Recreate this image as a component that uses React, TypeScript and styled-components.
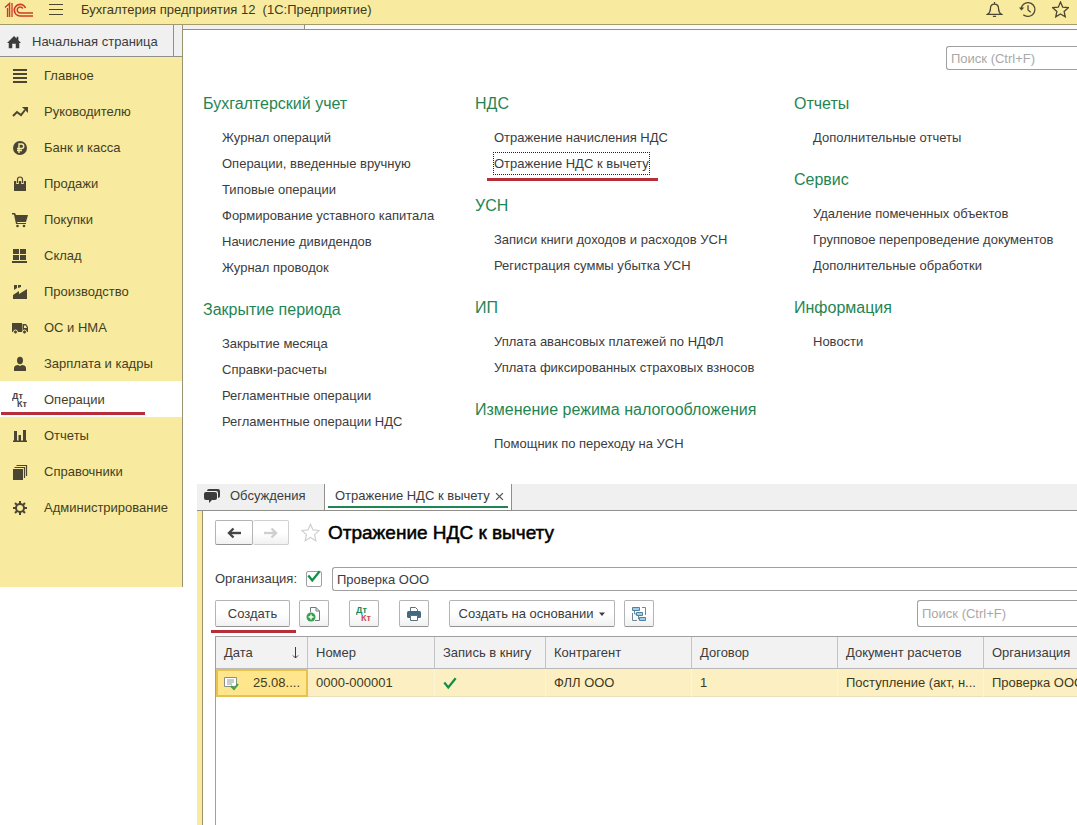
import React from "react";
import styled, { createGlobalStyle, css } from "styled-components";

const c = {
  yellow: "#f8eb9f",
  line: "#8f8f8c",
  soft: "#f0f0f0",
  green: "#1f8553",
  red: "#b82d3a",
  text: "#3c3c3c",
  icon: "#4b4633",
};

const Global = createGlobalStyle`
  *, *::before, *::after { box-sizing: border-box; }
  html, body, #root { height: 100%; }
  body { margin: 0; background: #fff; color: ${c.text}; font: 13px/16px "Liberation Sans", Arial, sans-serif; overflow-x: hidden; }
  button, input { font: inherit; color: inherit; }
  h1, h2, ul { margin: 0; padding: 0; font-weight: 400; }
  ul { list-style: none; }
  a { color: inherit; text-decoration: none; }
  svg { display: block; flex: none; }
`;

const Page = styled.div`
  display: flex;
  flex-direction: column;
  min-height: 100vh;
  overflow: hidden;
`;

const Header = styled.header`
  display: flex;
  align-items: center;
  height: 25px;
  padding: 0 8px 5px 4px;
  background: ${c.yellow};
  border-bottom: 1px solid #a39a6e;
`;

const AppTitle = styled.span`
  flex: 1;
  margin-left: 17px;
  white-space: pre;
  color: #40391d;
`;

const IconButton = styled.button`
  display: grid;
  place-items: center;
  padding: 0;
  border: 0;
  background: none;
  color: ${c.icon};
`;

const MenuButton = styled(IconButton)`
  margin-left: 14px;
`;

const HeaderActions = styled.div`
  display: flex;
  gap: 16px;
`;

const Body = styled.div`
  display: flex;
  flex: 1;
`;

const Sidebar = styled.aside`
  flex: none;
  align-self: flex-start;
  width: 183px;
  background: ${c.yellow};
  border-right: 1px solid #99936f;
`;

const HomeRow = styled.div`
  height: 32px;
  background: ${c.soft};
  border-bottom: 1px solid ${c.line};
`;

const HomeTab = styled.a`
  display: flex;
  align-items: center;
  gap: 11px;
  width: 174px;
  height: 31px;
  padding: 2px 0 0 7px;
  border-right: 1px solid ${c.line};
`;

const NavList = styled.ul`
  padding-bottom: 62px;
`;

const NavItem = styled.li<{ $active?: boolean }>`
  position: relative;
  height: 36px;
  background: ${(p) => (p.$active ? "#fff" : "transparent")};
`;

const NavLink = styled.a`
  display: flex;
  align-items: center;
  gap: 16px;
  height: 36px;
  padding: 2px 0 0 12px;
  color: #453e1f;
`;

const Mark = styled.span<{ $left: number; $width: number; $bottom: number }>`
  position: absolute;
  left: ${(p) => p.$left}px;
  bottom: ${(p) => p.$bottom}px;
  width: ${(p) => p.$width}px;
  height: 3px;
  background: ${c.red};
`;

const Main = styled.main`
  display: flex;
  flex-direction: column;
  flex: 1;
  min-width: 0;
`;

const HiddenTabs = styled.div`
  height: 4px;
  background: #fafafa;
`;

const HiddenTab = styled.div`
  width: 122px;
  height: 4px;
  background: ${c.soft};
  border-right: 1px solid ${c.line};
`;

const MenuPanel = styled.section`
  border-top: 1px solid ${c.line};
  padding: 16px 0 27px 20px;
`;

const searchBox = css`
  padding: 0 4px;
  border: 1px solid #a0a0a0;
  border-right: 0;
  border-radius: 3px 0 0 3px;
  background: #fff;
  outline: none;
  &::placeholder { color: #a8a8a8; opacity: 1; }
`;

const MenuSearch = styled.input`
  ${searchBox}
  display: block;
  width: 131px;
  height: 24px;
  margin-left: auto;
`;

const MenuGrid = styled.div`
  display: grid;
  grid-template-columns: 272px 319px 1fr;
  margin-top: 22px;
`;

const MenuColumn = styled.div`
  display: flex;
  flex-direction: column;
  gap: 17px;
`;

const GroupTitle = styled.h2`
  margin-bottom: 9px;
  font-size: 16px;
  line-height: 24px;
  color: ${c.green};
`;

const MenuItem = styled.li`
  position: relative;
  padding-left: 19px;
  line-height: 26px;
  white-space: nowrap;
`;

const MenuLink = styled.a<{ $focused?: boolean }>`
  outline: ${(p) => (p.$focused ? "1px dotted #222" : "none")};
  padding: 3px 0;
`;

const Window = styled.section`
  display: flex;
  flex-direction: column;
  flex: 1;
  margin-left: 14px;
`;

const Tabs = styled.div`
  display: flex;
  height: 27px;
  background: ${c.soft};
  border-bottom: 1px solid ${c.line};
`;

const Tab = styled.div<{ $active?: boolean }>`
  position: relative;
  display: flex;
  align-items: center;
  gap: ${(p) => (p.$active ? 5 : 10)}px;
  width: ${(p) => (p.$active ? 187 : 128)}px;
  height: 26px;
  padding: 0 7px 2px ${(p) => (p.$active ? 10 : 7)}px;
  border-right: 1px solid ${c.line};
  white-space: nowrap;
  background: ${(p) => (p.$active ? "#fff" : "transparent")};
  ${(p) =>
    p.$active &&
    css`
      &::after {
        content: "";
        position: absolute;
        left: 3px;
        right: 3px;
        bottom: 2px;
        height: 2px;
        background: ${c.green};
      }
    `}
`;

const WindowBody = styled.div`
  flex: 1;
  min-width: 0;
  display: flex;
  flex-direction: column;
  padding: 9px 0 0 12px;
  border-left: 1px solid #99936f;
`;

const Framed = styled.div`
  display: flex;
  flex: 1;
  min-width: 0;
  border-left: 5px solid ${c.yellow};
`;

const TitleRow = styled.div`
  display: flex;
  align-items: center;
  height: 25px;
`;

const buttonFace = css`
  border: 1px solid #b4b4b4;
  border-bottom-color: #929292;
  border-radius: 2px;
  background: linear-gradient(#fff 50%, #f1f1f1);
`;

const NavButtons = styled.div`
  display: flex;
  width: 74px;
  height: 25px;
  margin-right: 12px;
`;

const StepButton = styled.button`
  ${buttonFace}
  display: grid;
  place-items: center;
  width: 38px;
  padding: 0;
  color: #454545;
  &:disabled {
    width: 36px;
    border-left: 0;
    border-color: #d0d0d0;
    color: #cfcfcf;
  }
`;

const Title = styled.h1`
  margin-left: 8px;
  font-size: 19px;
  line-height: 24px;
  color: #000;
  -webkit-text-stroke: 0.5px #000;
`;

const OrgRow = styled.div`
  display: flex;
  align-items: center;
  margin-top: 22px;
`;

const OrgLabel = styled.label`
  width: 91px;
`;

const CheckHolder = styled.span`
  position: relative;
  width: 16px;
  height: 16px;
  margin-right: 10px;
  svg { position: absolute; left: 1px; top: -2px; pointer-events: none; }
`;

const Check = styled.input`
  appearance: none;
  display: block;
  width: 16px;
  height: 16px;
  margin: 0;
  border: 1px solid #a0a0a0;
  border-radius: 2px;
  background: #fff;
`;

const OrgInput = styled.input`
  ${searchBox}
  flex: 1;
  min-width: 0;
  height: 24px;
`;

const Toolbar = styled.div`
  display: flex;
  align-items: center;
  margin-top: 9px;
  height: 27px;
`;

const ToolButton = styled.button<{ $width?: number; $gap?: number }>`
  ${buttonFace}
  display: flex;
  align-items: center;
  justify-content: center;
  gap: 6px;
  flex: none;
  width: ${(p) => p.$width ?? 30}px;
  height: 27px;
  margin-right: ${(p) => p.$gap ?? 20}px;
  padding: 0;
  white-space: nowrap;
`;

const Marked = styled.div`
  position: relative;
`;

const ListSearch = styled.input`
  ${searchBox}
  width: 160px;
  height: 27px;
  margin-left: auto;
`;

const TableArea = styled.div`
  flex: 1;
  margin-top: 9px;
  border-top: 1px solid #a0a0a0;
  border-left: 1px solid #a0a0a0;
  overflow: hidden;
`;

const Table = styled.table`
  width: 100%;
  min-width: 914px;
  table-layout: fixed;
  border-collapse: separate;
  border-spacing: 0;
`;

const Th = styled.th<{ $width?: number }>`
  width: ${(p) => (p.$width ? `${p.$width}px` : "auto")};
  height: 32px;
  padding: 0 8px;
  border-right: 1px solid #c4c4c4;
  border-bottom: 1px solid #b8b8b8;
  background: #f2f2f2;
  font-weight: 400;
  text-align: left;
  white-space: nowrap;
`;

const Td = styled.td<{ $selected?: boolean }>`
  height: 28px;
  padding: 0 8px;
  border-right: 1px solid #fdf5d8;
  border-bottom: 1px solid #e8e0bd;
  background: #fcf0c3;
  white-space: nowrap;
  color: #40391d;
  ${(p) =>
    p.$selected &&
    css`
      padding: 0 6px 0 5px;
      border: 2px solid #e8c24f;
      background: #ffe58b;
    `}
`;

const Spread = styled.span`
  display: flex;
  align-items: center;
  justify-content: space-between;
`;

const Svg = ({ s = 16, children, ...rest }: any) => (
  <svg width={s} height={s} viewBox="0 0 16 16" fill="none" aria-hidden="true" {...rest}>
    {children}
  </svg>
);

const DtKt = ({ a, b }: { a: string; b: string }) => (
  <Svg fontFamily="Liberation Sans, sans-serif" fontWeight="700" fontSize="9">
    <text x="0" y="7" fill={a}>Дт</text>
    <text x="5" y="15" fill={b}>Кт</text>
  </Svg>
);

const icons: Record<string, React.ReactNode> = {
  main: <Svg><path d="M1 2h14M1 6h14M1 10h14M1 14h14" stroke={c.icon} strokeWidth="2" /></Svg>,
  chart: (
    <Svg>
      <path d="M1 12l4-4 4 3 4-5" stroke={c.icon} strokeWidth="2" />
      <path d="M10 3h6v6z" fill={c.icon} />
    </Svg>
  ),
  ruble: (
    <Svg>
      <circle cx="8" cy="8" r="7" fill={c.icon} />
      <path d="M7 13V4h2.500a2.200 2.200 0 010 4.500H5M5 10.500h5" stroke={c.yellow} strokeWidth="1.400" />
    </Svg>
  ),
  bag: (
    <Svg>
      <path d="M2 5h12v10H2z" fill={c.icon} />
      <path d="M5.500 8V4a2.500 2.500 0 015 0v4" stroke={c.yellow} strokeWidth="2.600" />
      <path d="M5.500 7V3.500a2.500 2.500 0 015 0V7" stroke={c.icon} strokeWidth="1.200" />
    </Svg>
  ),
  cart: (
    <Svg>
      <path d="M0 1h3l1 2h12l-2 7H5l.5 1H14v1H4L2 2.500H0z" fill={c.icon} />
      <circle cx="5.500" cy="14" r="1.300" fill={c.icon} />
      <circle cx="12" cy="14" r="1.300" fill={c.icon} />
    </Svg>
  ),
  store: <Svg><path d="M1 1h6v5H1zM8 1h6v5H8zM1 7h6v5H1zM8 7h6v5H8zM0 13h15v2H0z" fill={c.icon} /></Svg>,
  factory: (
    <Svg>
      <path d="M1 15v-4l6-4v3l8-5v10zM2 1h3v3L2 6zM6 1h3v2L6 4z" fill={c.icon} />
    </Svg>
  ),
  truck: (
    <Svg>
      <path d="M0 3h10v9H0zM10.500 4H14l2 3v5h-5.500z" fill={c.icon} />
      <path d="M12 5.500h1.700L15 8h-3z" fill={c.yellow} />
      <circle cx="3.500" cy="12" r="2" fill={c.icon} stroke={c.yellow} />
      <circle cx="12.500" cy="12" r="2" fill={c.icon} stroke={c.yellow} />
    </Svg>
  ),
  person: (
    <Svg>
      <ellipse cx="8" cy="4.500" rx="3" ry="3.700" fill={c.icon} />
      <path d="M2 15v-3c0-2 2-3 4-3l2 1 2-1c2 0 4 1 4 3v3z" fill={c.icon} />
    </Svg>
  ),
  dtkt: <DtKt a="#454545" b="#454545" />,
  bars: <Svg><path d="M1 12.500h14V14H1zM2 3h3v10H2zM6.500 7h2.500v6H6.500zM11 2h3v11h-3z" fill={c.icon} /></Svg>,
  books: (
    <Svg>
      <path d="M1 5h10v11H1z" fill={c.icon} />
      <path d="M2.500 3.500h10V14M4.500 1.500h10V12" stroke={c.icon} strokeWidth="1.200" />
    </Svg>
  ),
  gear: (
    <Svg>
      <circle cx="8" cy="8" r="4" stroke={c.icon} strokeWidth="2" />
      <path d="M8 1v3M8 12v3M1 8h3M12 8h3M3 3l2 2M11 11l2 2M3 13l2-2M11 5l2-2" stroke={c.icon} strokeWidth="2" />
    </Svg>
  ),
};

const nav = [
  ["main", "Главное"],
  ["chart", "Руководителю"],
  ["ruble", "Банк и касса"],
  ["bag", "Продажи"],
  ["cart", "Покупки"],
  ["store", "Склад"],
  ["factory", "Производство"],
  ["truck", "ОС и НМА"],
  ["person", "Зарплата и кадры"],
  ["dtkt", "Операции"],
  ["bars", "Отчеты"],
  ["books", "Справочники"],
  ["gear", "Администрирование"],
];

const focusedItem = "Отражение НДС к вычету";

const menu: { title: string; items: string[] }[][] = [
  [
    {
      title: "Бухгалтерский учет",
      items: [
        "Журнал операций",
        "Операции, введенные вручную",
        "Типовые операции",
        "Формирование уставного капитала",
        "Начисление дивидендов",
        "Журнал проводок",
      ],
    },
    {
      title: "Закрытие периода",
      items: ["Закрытие месяца", "Справки-расчеты", "Регламентные операции", "Регламентные операции НДС"],
    },
  ],
  [
    { title: "НДС", items: ["Отражение начисления НДС", focusedItem] },
    { title: "УСН", items: ["Записи книги доходов и расходов УСН", "Регистрация суммы убытка УСН"] },
    { title: "ИП", items: ["Уплата авансовых платежей по НДФЛ", "Уплата фиксированных страховых взносов"] },
    { title: "Изменение режима налогообложения", items: ["Помощник по переходу на УСН"] },
  ],
  [
    { title: "Отчеты", items: ["Дополнительные отчеты"] },
    {
      title: "Сервис",
      items: ["Удаление помеченных объектов", "Групповое перепроведение документов", "Дополнительные обработки"],
    },
    { title: "Информация", items: ["Новости"] },
  ],
];

const Logo = () => (
  <svg width="30" height="16" viewBox="0 0 30 16" fill="none" stroke="#cf3a28" aria-label="1С">
    <path d="M1 5.500l4.500-4V15" strokeWidth="1.500" />
    <path d="M3.500 6v9M8 1v14" strokeWidth="1.300" />
    <path d="M21.500 6A5.800 5.800 0 1016 14h13" strokeWidth="1.700" />
    <path d="M18.800 6.500A3 3 0 1016 11h13" strokeWidth="1.500" />
  </svg>
);

const star = "M8 1l2.100 4.800 5.200.5-3.900 3.500 1.100 5.100L8 12.200l-4.500 2.700 1.100-5.100L.7 6.300l5.200-.5z";

const GreenCheck = () => (
  <Svg s={14}><path d="M1.500 7.500l4.500 5.500L14.500 2.500" stroke="#109045" strokeWidth="2.600" /></Svg>
);

const Arrow = ({ back }: { back?: boolean }) => (
  <Svg>
    <path d={back ? "M15 8H3" : "M1 8h12"} stroke="currentColor" strokeWidth="2.400" />
    <path d={back ? "M7.500 3.500L3 8l4.500 4.500" : "M8.500 3.500L13 8l-4.500 4.500"} stroke="currentColor" strokeWidth="2.400" />
  </Svg>
);

export default function App() {
  return (
    <Page>
      <Global />
      <Header>
        <Logo />
        <MenuButton aria-label="Меню">
          <Svg><path d="M1 2.500h14M1 7.500h14M1 12.500h14" stroke="currentColor" strokeWidth="1.200" /></Svg>
        </MenuButton>
        <AppTitle>{"Бухгалтерия предприятия 12  (1С:Предприятие)"}</AppTitle>
        <HeaderActions>
          <IconButton aria-label="Уведомления">
            <Svg s={17}>
              <path d="M1.500 12.500h13c-2.200-1.500-2.700-3-2.700-5.500 0-2.500-1.600-4-3.800-4S4.200 4.500 4.200 7c0 2.500-.5 4-2.700 5.500zM8 1v2M6.500 14.500h3" stroke="currentColor" strokeWidth="1.200" />
            </Svg>
          </IconButton>
          <IconButton aria-label="История">
            <Svg s={17}>
              <path d="M2 7.500A6.500 6.500 0 118 14.500a6 6 0 01-4-1.500M8.500 4v4.500l2.500 2" stroke="currentColor" strokeWidth="1.200" />
              <path d="M0 6h5L2.300 9z" fill="currentColor" />
            </Svg>
          </IconButton>
          <IconButton aria-label="Избранное">
            <Svg s={17}><path d={star} stroke="currentColor" strokeWidth="1.200" /></Svg>
          </IconButton>
        </HeaderActions>
      </Header>
      <Body>
        <Sidebar>
          <HomeRow>
            <HomeTab href="#home">
              <Svg s={14}><path d="M8 1L0 9h2v6h4v-5h4v5h4V9h2L13 6V2h-2v2z" fill="#3c3c3c" /></Svg>
              Начальная страница
            </HomeTab>
          </HomeRow>
          <nav>
            <NavList>
              {nav.map(([icon, label]) => (
                <NavItem key={icon} $active={icon === "dtkt"}>
                  <NavLink href={`#${icon}`}>
                    {icons[icon]}
                    {label}
                  </NavLink>
                  {icon === "dtkt" && <Mark $left={1} $width={144} $bottom={2} />}
                </NavItem>
              ))}
            </NavList>
          </nav>
        </Sidebar>
        <Main>
          <HiddenTabs><HiddenTab /></HiddenTabs>
          <MenuPanel>
            <MenuSearch type="search" aria-label="Поиск по меню" placeholder="Поиск (Ctrl+F)" />
            <MenuGrid>
              {menu.map((column) => (
                <MenuColumn key={column[0].title}>
                  {column.map((group) => (
                    <section key={group.title}>
                      <GroupTitle>{group.title}</GroupTitle>
                      <ul>
                        {group.items.map((item) => (
                          <MenuItem key={item}>
                            <MenuLink href="#item" $focused={item === focusedItem}>{item}</MenuLink>
                            {item === focusedItem && <Mark $left={12} $width={171} $bottom={-4} />}
                          </MenuItem>
                        ))}
                      </ul>
                    </section>
                  ))}
                </MenuColumn>
              ))}
            </MenuGrid>
          </MenuPanel>
          <Window>
            <Tabs>
              <Tab>
                <Svg s={16}>
                  <path d="M5 1h9a2 2 0 012 2v5a2 2 0 01-2 2V5a2 2 0 00-2-2H3a2 2 0 012-2z" fill="#3c3c3c" />
                  <path d="M2 4h9a2 2 0 012 2v4a2 2 0 01-2 2H8l-3 3v-3H2a2 2 0 01-2-2V6a2 2 0 012-2z" fill="#3c3c3c" />
                </Svg>
                Обсуждения
              </Tab>
              <Tab $active>
                Отражение НДС к вычету
                <IconButton aria-label="Закрыть">
                  <Svg s={9}><path d="M2 2l12 12M14 2L2 14" stroke="#555" strokeWidth="2.400" /></Svg>
                </IconButton>
              </Tab>
            </Tabs>
            <Framed>
              <WindowBody>
                <TitleRow>
                  <NavButtons>
                    <StepButton aria-label="Назад"><Arrow back /></StepButton>
                    <StepButton aria-label="Вперед" disabled><Arrow /></StepButton>
                  </NavButtons>
                  <IconButton aria-label="В избранное">
                    <Svg s={19}><path d={star} stroke="#cfcfcf" /></Svg>
                  </IconButton>
                  <Title>Отражение НДС к вычету</Title>
                </TitleRow>
                <OrgRow>
                  <OrgLabel htmlFor="org">Организация:</OrgLabel>
                  <CheckHolder>
                    <Check type="checkbox" defaultChecked aria-label="Отбор по организации" />
                    <GreenCheck />
                  </CheckHolder>
                  <OrgInput id="org" defaultValue="Проверка ООО" />
                </OrgRow>
                <Toolbar>
                  <Marked>
                    <ToolButton $width={75} $gap={9}>Создать</ToolButton>
                    <Mark $left={-4} $width={85} $bottom={-6} />
                  </Marked>
                  <ToolButton aria-label="Скопировать">
                    <Svg>
                      <path d="M4.500 6V1.500H10L13.500 5v9.500H9M10 1.500V5h3.500" stroke="#6c7a80" />
                      <circle cx="5" cy="11" r="4.500" fill="#36a04c" />
                      <path d="M5 8.500v5M2.500 11h5" stroke="#fff" strokeWidth="1.400" />
                    </Svg>
                  </ToolButton>
                  <ToolButton aria-label="Проводки"><DtKt a="#218a59" b="#cd4b4b" /></ToolButton>
                  <ToolButton aria-label="Печать">
                    <Svg>
                      <path d="M4.500 5V1.500h5l2 2V5" fill="#fff" stroke="#56717f" />
                      <rect x="1" y="5" width="14" height="7" rx="1.500" fill="#44697f" />
                      <path d="M4.500 9.500h7v5h-7z" fill="#fff" stroke="#56717f" />
                    </Svg>
                  </ToolButton>
                  <ToolButton $width={166} $gap={9}>
                    Создать на основании
                    <Svg s={6}><path d="M0 4h16l-8 9z" fill="#3c3c3c" /></Svg>
                  </ToolButton>
                  <ToolButton aria-label="Структура подчиненности">
                    <Svg>
                      <path d="M3.500 5v3h2M7.500 10v3h2M11 1.500h3.500V9M1.500 7v7.500H6" stroke="#6f8794" />
                      <path d="M1.500 1.500h7v3h-7zM5.500 6.500h6v3h-6zM8.500 11.500h6v3h-6z" fill="#a6cce4" stroke="#4f83a5" />
                    </Svg>
                  </ToolButton>
                  <ListSearch type="search" aria-label="Поиск в списке" placeholder="Поиск (Ctrl+F)" />
                </Toolbar>
                <TableArea>
                  <Table>
                    <thead>
                      <tr>
                        <Th $width={92}>
                          <Spread>
                            Дата
                            <svg width="7" height="12" viewBox="0 0 7 12" fill="none" stroke="#3c3c3c" aria-hidden="true">
                              <path d="M3.500 0v11M1 8.500l2.500 2.500L6 8.500" />
                            </svg>
                          </Spread>
                        </Th>
                        <Th $width={127}>Номер</Th>
                        <Th $width={111}>Запись в книгу</Th>
                        <Th $width={146}>Контрагент</Th>
                        <Th $width={146}>Договор</Th>
                        <Th $width={146}>Документ расчетов</Th>
                        <Th>Организация</Th>
                      </tr>
                    </thead>
                    <tbody>
                      <tr>
                        <Td $selected>
                          <Spread>
                            <Svg>
                              <path d="M1.500 2.500h12v9h-12z" fill="#fff" stroke="#8a8f86" />
                              <path d="M4 5h7M4 7h7M4 9h5" stroke="#8a9aa0" />
                              <path d="M8 11l3 3 4-5" stroke="#3fa047" strokeWidth="2" />
                            </Svg>
                            25.08....
                          </Spread>
                        </Td>
                        <Td>0000-000001</Td>
                        <Td><GreenCheck /></Td>
                        <Td>ФЛЛ ООО</Td>
                        <Td>1</Td>
                        <Td>Поступление (акт, н...</Td>
                        <Td>Проверка ООО</Td>
                      </tr>
                    </tbody>
                  </Table>
                </TableArea>
              </WindowBody>
            </Framed>
          </Window>
        </Main>
      </Body>
    </Page>
  );
}
